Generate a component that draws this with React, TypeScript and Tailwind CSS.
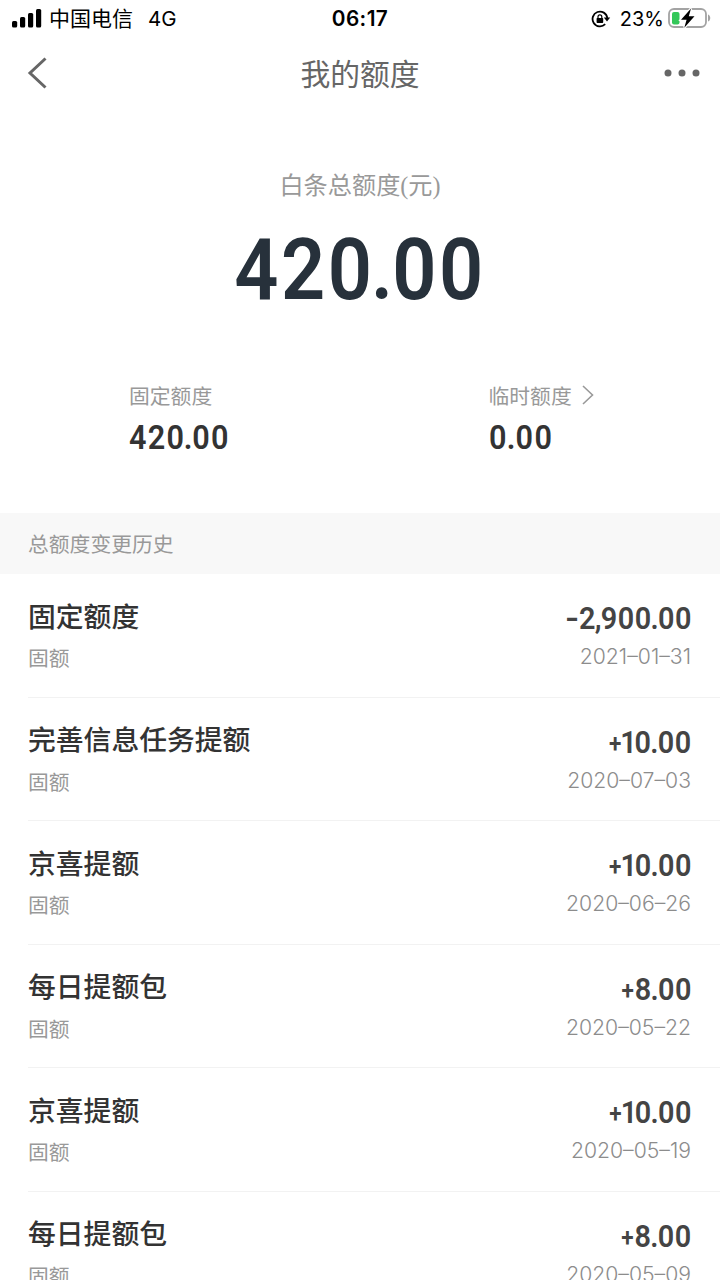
const historyList = [
  { title: "固定额度", type: "固额", amount: "-2,900.00", date: "2021–01–31" },
  { title: "完善信息任务提额", type: "固额", amount: "+10.00", date: "2020–07–03" },
  { title: "京喜提额", type: "固额", amount: "+10.00", date: "2020–06–26" },
  { title: "每日提额包", type: "固额", amount: "+8.00", date: "2020–05–22" },
  { title: "京喜提额", type: "固额", amount: "+10.00", date: "2020–05–19" },
  { title: "每日提额包", type: "固额", amount: "+8.00", date: "2020–05–09" },
];

const StatusBar = () => {
  return (
    <div className="grid grid-cols-3 items-center h-[37px] pl-[12px] pr-[9px] text-black">
      <div className="flex items-center">
        <svg width="30" height="20" viewBox="0 0 30 20">
          <rect x="0" y="12" width="5.2" height="6.5" rx="1.5" />
          <rect x="8" y="8" width="5.2" height="10.5" rx="1.5" />
          <rect x="16" y="4" width="5.2" height="14.5" rx="1.5" />
          <rect x="24" y="0" width="5.2" height="18.5" rx="1.5" />
        </svg>
        <span className="ml-[7px] mb-[3px] text-[21px] leading-[30px] whitespace-nowrap">中国电信</span>
        <span className="ml-[15px] text-[20.5px] leading-[30px] font-['Inter',sans-serif]">4G</span>
      </div>

      <div className="-ml-[3px] text-center text-[20.8px] leading-[30px] font-semibold font-['Inter',sans-serif] tracking-[0.4px]">
        06:17
      </div>

      <div className="flex items-center justify-end">
        <svg width="20" height="18" viewBox="0 0 20 18" fill="none" className="mr-[9px]">
          <path d="M14.2 14.2A7.4 7.4 0 1 1 16.3 8" stroke="#000" strokeWidth="1.8" />
          <path d="M12.8 7.4h6.4l-3.2 4.2z" fill="#000" />
          <rect x="5.6" y="8" width="6.6" height="5" rx="0.7" fill="#000" />
          <path d="M7 8.5V6.7a1.9 1.9 0 0 1 3.8 0v1.8" stroke="#000" strokeWidth="1.2" />
        </svg>
        <span className="text-[20px] leading-[30px] font-['Inter',sans-serif] mr-[4px]">23%</span>
        <svg width="43" height="22" viewBox="0 0 43 22" fill="none" className="mb-[2px]">
          <rect x="1" y="2" width="37" height="18" rx="5" stroke="#a3a3a3" strokeWidth="1.8" />
          <path d="M40 7.5c3 1 3 6 0 7z" fill="#a3a3a3" />
          <rect x="4" y="5" width="7.5" height="12.5" rx="2" fill="#34c759" />
          <path
            d="M23 1.5 13 12.7h5.6l-2.3 8L26.5 9.3h-5.7z"
            fill="#000"
            stroke="#fff"
            strokeWidth="2.4"
            paintOrder="stroke"
          />
        </svg>
      </div>
    </div>
  );
};

const NavBar = () => {
  return (
    <div className="flex items-center justify-between h-[73px] pl-[27px] pr-[20px] pb-[1px]">
      <svg width="29" height="34" viewBox="0 0 29 34" fill="none">
        <path d="M18.5 2.5 3 17l15.5 14.5" stroke="#666" strokeWidth="3" />
      </svg>
      <div className="mb-[3px] text-[29.8px] leading-[40px] text-[#666]">我的额度</div>
      <svg width="36" height="8" viewBox="0 0 36 8" fill="#666">
        <circle cx="4" cy="4" r="3.5" />
        <circle cx="18" cy="4" r="3.5" />
        <circle cx="32" cy="4" r="3.5" />
      </svg>
    </div>
  );
};

// digits with a tight decimal point and thousands separator
const Digits = ({ value }: { value: string }) => {
  return (
    <>
      {value.split(/([.,])/).map((part, index) =>
        part === "." || part === "," ? (
          <span key={index} className="-mx-[0.045em]">
            {part}
          </span>
        ) : (
          part
        )
      )}
    </>
  );
};

const Amount = ({ value }: { value: string }) => {
  const sign = value[0];
  const digits = value.slice(1);

  return (
    <div className="origin-right scale-x-90 text-[32px] leading-[40px] font-semibold text-[#444] font-['Roboto',sans-serif] tracking-[0.02em] -mr-[1px]">
      {sign === "+" ? (
        <span className="text-[25px] leading-none align-[1px] tracking-[1px]">+</span>
      ) : (
        <span className="inline-block origin-right scale-x-130 mr-[-1px]">-</span>
      )}
      {digits[0] === "1" ? (
        <>
          <span className="tracking-[-2.5px] -ml-[2px]">1</span>
          <Digits value={digits.slice(1)} />
        </>
      ) : (
        <Digits value={digits} />
      )}
    </div>
  );
};

export default function App() {
  return (
    <div className="w-[720px] h-[1280px] overflow-hidden bg-white font-['Noto_Sans_CJK_SC',sans-serif]">
      <StatusBar />
      <NavBar />

      <div className="h-[403px] pt-[58px]">
        <div className="text-center text-[24.2px] leading-[36px] text-[#999] font-['Liberation_Serif','Noto_Sans_CJK_SC',serif]">
          白条总额度(元)
        </div>
        <div className="mt-[20px] scale-x-90 text-center text-[86px] leading-[92px] font-semibold text-[#27313b] font-['Roboto',sans-serif] tracking-[0.033em]">
          <Digits value="420.00" />
        </div>

        <div className="grid grid-cols-2 mt-[64px] pl-[129px]">
          <div>
            <div className="text-[20.8px] leading-[30px] text-[#999]">固定额度</div>
            <div className="mt-[7px] origin-left scale-x-90 text-[34px] leading-[40px] font-semibold text-[#333] font-['Roboto',sans-serif] tracking-[0.04em]">
              <Digits value="420.00" />
            </div>
          </div>
          <div className="pl-[64px]">
            <div className="flex items-center text-[20.8px] leading-[30px] text-[#999]">
              临时额度
              <svg width="14" height="20" viewBox="0 0 14 20" fill="none" className="ml-[9px]">
                <path d="M2 1l9.5 9L2 19" stroke="#999" strokeWidth="1.6" />
              </svg>
            </div>
            <div className="mt-[7px] origin-left scale-x-90 text-[34px] leading-[40px] font-semibold text-[#333] font-['Roboto',sans-serif] tracking-[0.05em]">
              <Digits value="0.00" />
            </div>
          </div>
        </div>
      </div>

      <div className="h-[61px] pl-[28px] bg-[#f8f8f8] text-[20.8px] leading-[61px] text-[#999]">
        总额度变更历史
      </div>

      <div className="pl-[28px]">
        {historyList.map((item, index) => (
          <div
            key={index}
            className="flex justify-between h-[123.5px] pr-[29px] border-b border-[#f2f2f2]"
          >
            <div className="pt-[20.5px]">
              <div className="text-[27.8px] leading-[40px] font-medium text-[#333]">{item.title}</div>
              <div className="mt-[7.5px] text-[20.8px] leading-[30px] text-[#999]">
                {item.type}
              </div>
            </div>
            <div className="pt-[24px] text-right">
              <Amount value={item.amount} />
              <div className="mt-[3px] text-[21.2px] leading-[30px] font-light text-[#8c8c8c] font-['Inter',sans-serif]">
                {item.date}
              </div>
            </div>
          </div>
        ))}
      </div>
    </div>
  );
}
